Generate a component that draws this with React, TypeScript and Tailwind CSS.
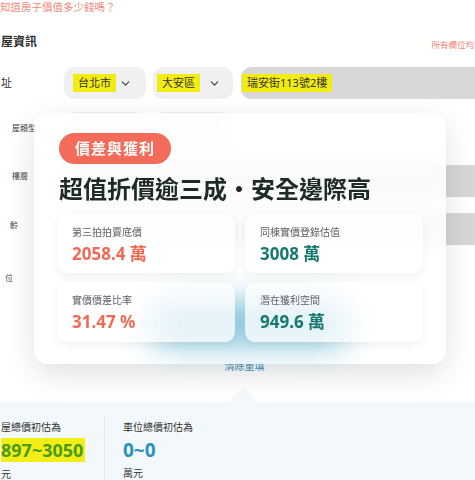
import React from 'react';
import { ChevronDown } from 'lucide-react';

const FONT = { fontFamily: '"Noto Sans", "Noto Sans CJK TC", sans-serif' };

const Hl: React.FC<{ children: React.ReactNode }> = ({ children }) => (
  <span className="bg-[#f2ec12] px-[5px] py-[1px] text-[11px] leading-[16px] text-[#333]">{children}</span>
);

const Stat: React.FC<{ label: string; value: string; tone: 'red' | 'teal' }> = ({ label, value, tone }) => (
  <div className="relative z-10 h-full rounded-[10px] bg-white/75 pl-[15px] pt-[11px] shadow-[0_3px_10px_rgba(0,0,0,0.06)]">
    <p className="text-[10px] leading-[14px] text-[#5a5f66]">{label}</p>
    <p
      className={
        'mt-[4px] text-[17px] font-bold leading-[22px] ' +
        (tone === 'red' ? 'text-[#ef6a55]' : 'text-[#17786f]')
      }
    >
      {value}
    </p>
  </div>
);

export default function App() {
  return (
    <div className="relative h-[480px] w-[475px] overflow-hidden bg-white" style={FONT}>
      {/* page behind the card */}
      <div className="flex flex-col">
        <p className="text-[10.5px] leading-[14px] text-[#f0897a]">知道房子價值多少錢嗎？</p>

        <div className="mt-[20px] flex h-[16px] items-center justify-between">
          <span className="ml-[1px] text-[12px] font-bold text-[#2b2b2b]">屋資訊</span>
          <span className="mr-[1px] mt-[6px] whitespace-nowrap text-[8.5px] text-[#ef7f6c]">所有欄位均</span>
        </div>

        {/* 地址 */}
        <div className="mt-[17px] flex h-[32px] items-center">
          <span className="ml-[1px] w-[63px] text-[11px] text-[#333]">址</span>
          <div className="flex h-[32px] w-[82px] items-center justify-between rounded-[10px] bg-[#f0f0f2] pl-[9px] pr-[14px]">
            <Hl>台北市</Hl>
            <ChevronDown size={13} strokeWidth={2.2} className="text-[#444]" />
          </div>
          <div className="ml-[7px] flex h-[32px] w-[80px] items-center justify-between rounded-[10px] bg-[#f0f0f2] pl-[4px] pr-[12px]">
            <Hl>大安區</Hl>
            <ChevronDown size={13} strokeWidth={2.2} className="text-[#444]" />
          </div>
          <div className="ml-[8px] flex h-[32px] flex-1 items-center rounded-l-[10px] bg-[#d8d8da] pl-[1px]">
            <Hl>瑞安街113號2樓</Hl>
          </div>
        </div>

        {/* 房屋類型 */}
        <div className="mt-[13px] flex h-[32px] items-center">
          <span className="ml-[12px] w-[52px] text-[8px] text-[#444]">屋類型</span>
          <div className="h-[32px] w-[82px] rounded-[10px] bg-[#f0f0f2]" />
          <div className="ml-[7px] h-[32px] w-[80px] rounded-[10px] bg-[#f0f0f2]" />
        </div>

        {/* 樓層 */}
        <div className="mt-[21px] flex h-[32px] items-start">
          <span className="ml-[12px] mt-[5px] w-[52px] text-[8px] text-[#444]">樓層</span>
          <div className="h-[32px] flex-1 rounded-l-[10px] bg-[#d6d6d8]" />
        </div>

        {/* 屋齡 */}
        <div className="mt-[16px] flex h-[32px] items-start">
          <span className="ml-[10px] mt-[6px] w-[54px] text-[8px] text-[#444]">齡</span>
          <div className="h-[32px] flex-1 rounded-l-[10px] bg-[#d6d6d8]" />
        </div>

        {/* 車位 */}
        <div className="mt-[17px] flex h-[32px] items-center">
          <span className="ml-[5px] w-[59px] text-[8px] text-[#444]">位</span>
          <div className="h-[32px] w-[82px] rounded-[10px] bg-[#f0f0f2]" />
        </div>

        <p className="mt-[65px] pl-[14px] text-center text-[10px] leading-[14px] text-[#3b8cae]">清除重填</p>

        {/* result */}
        <div className="relative mt-[29px] h-[78px] bg-[#f2f8fb]">
          <div className="absolute left-[233px] top-[-10px] h-[20px] w-[20px] rotate-45 bg-[#f2f8fb]" />
          <div className="relative flex pt-[18px]">
            <div className="w-[104px] pl-[1px]">
              <p className="text-[10px] leading-[14px] text-[#333]">屋總價初估為</p>
              <p className="mt-[4px] inline-block bg-[#f3ef16] pr-[2px] text-[18px] font-bold leading-[24px] text-[#4a9a1c]">897~3050</p>
              <p className="mt-[4px] text-[10px] leading-[14px] text-[#333]">元</p>
            </div>
            <div className="-mt-[4px] h-[64px] w-px bg-[#dfe6ea]" />
            <div className="pl-[18px]">
              <p className="text-[10px] leading-[14px] text-[#333]">車位總價初估為</p>
              <p className="mt-[4px] text-[19px] font-bold leading-[24px] text-[#2a93ba]">0~0</p>
              <p className="mt-[4px] text-[10px] leading-[14px] text-[#333]">萬元</p>
            </div>
          </div>
        </div>
      </div>

      {/* overlay card */}
      <div className="absolute left-[34px] top-[113px] h-[251px] w-[412px] rounded-[14px] bg-white/85 px-[23px] pt-[20px] shadow-[0_10px_30px_rgba(0,0,0,0.12)] backdrop-blur-md">
        <span className="ml-[2px] inline-flex h-[31px] items-center rounded-full bg-[#f36b59] px-[16px] text-[15px] font-bold tracking-[1px] text-white">
          價差與獲利
        </span>
        <h2 className="ml-[2px] mt-[10px] text-[24px] font-bold leading-[30px] text-[#1d2a27]">超值折價逾三成・安全邊際高</h2>
        <div className="relative mt-[10px] grid grid-cols-2 gap-x-[10px] gap-y-[9px]">
          <div className="absolute left-[92px] top-[88px] h-[44px] w-[200px] rounded-full bg-[#7cc2dc] opacity-90 blur-lg" />
          <div className="h-[59px]">
            <Stat label="第三拍拍賣底價" value="2058.4 萬" tone="red" />
          </div>
          <div className="h-[59px]">
            <Stat label="同棟實價登錄估值" value="3008 萬" tone="teal" />
          </div>
          <div className="h-[60px]">
            <Stat label="實價價差比率" value="31.47 %" tone="red" />
          </div>
          <div className="h-[60px]">
            <Stat label="潛在獲利空間" value="949.6 萬" tone="teal" />
          </div>
        </div>
      </div>
    </div>
  );
}
